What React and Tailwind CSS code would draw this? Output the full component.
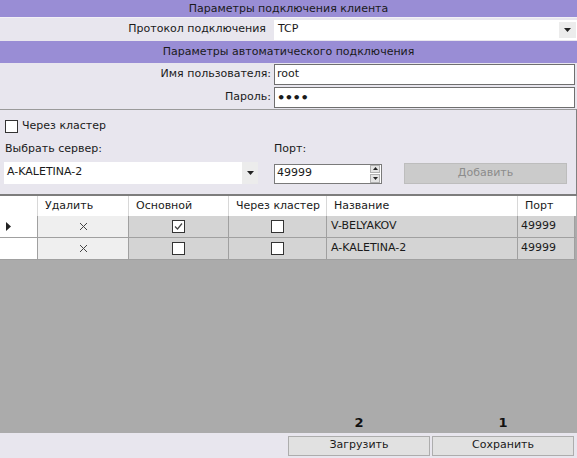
import React from "react";

const Caret = () => (
  <svg width="7" height="4" viewBox="0 0 7 4"><path d="M0 0h7L3.5 4z" fill="#222" /></svg>
);

const Box = ({ checked }) => (
  <span className="inline-flex w-[13px] h-[13px] border border-[#333] bg-white items-center justify-center">
    {checked && (
      <svg width="11" height="11" viewBox="0 0 11 11"><path d="M2 5.5l2.5 2.5L9 2.5" fill="none" stroke="#444" strokeWidth="1.2" /></svg>
    )}
  </span>
);

export default function App() {
  const font = { fontFamily: '"DejaVu Sans", Verdana, sans-serif' };
  const cols = "grid grid-cols-[38px_91px_100px_98px_191px_57px]";
  const rows = [
    { main: true, name: "V-BELYAKOV", port: "49999", cur: true },
    { main: false, name: "A-KALETINA-2", port: "49999" },
  ];
  return (
    <div style={font} className="w-[577px] h-[458px] flex flex-col bg-[#e8e6ee] text-[11px] text-[#1a1a1a] overflow-hidden">
      <div className="h-[17px] bg-[#998dd5] flex items-center justify-center leading-none">Параметры подключения клиента</div>
      <div className="h-[24px] flex items-center border-t border-[#f2f0f6]">
        <div className="w-[274px] text-right pr-[8px]">Протокол подключения</div>
        <div className="flex-1 h-[20px] bg-white flex items-center pl-[4px]">
          <span className="flex-1">TCP</span>
          <span className="w-[17px] h-[16px] bg-[#ececec] flex items-center justify-center mr-[1px]"><Caret /></span>
        </div>
      </div>
      <div className="h-[22px] bg-[#998dd5] flex items-center justify-center">Параметры автоматического подключения</div>
      <div className="h-[23px] flex items-center">
        <div className="w-[274px] text-right pr-[3px]">Имя пользователя:</div>
        <div className="flex-1 h-[21px] mr-[2px] bg-white border border-[#6f6f6f] flex items-center pl-[2px]">root</div>
      </div>
      <div className="h-[23px] flex items-center">
        <div className="w-[274px] text-right pr-[3px]">Пароль:</div>
        <div className="flex-1 h-[21px] mr-[2px] bg-white border border-[#6f6f6f] flex items-center pl-[2px] text-[13px] font-bold leading-none tracking-[-0.5px]">••••</div>
      </div>
      <div className="h-[85px] border-t border-[#9a9a9a] border-r border-r-[#808080] flex flex-col pl-[5px]">
        <div className="mt-[10px] h-[13px] flex items-center gap-[4px]">
          <Box />
          <span>Через кластер</span>
        </div>
        <div className="mt-[8px] flex">
          <div className="w-[269px]">Выбрать сервер:</div>
          <div>Порт:</div>
        </div>
        <div className="mt-[4px] flex items-start">
          <div className="w-[254px] -ml-[1px] h-[22px] bg-white flex items-center pl-[3px]">
            <span className="flex-1">A-KALETINA-2</span>
            <span className="w-[16px] h-[22px] bg-[#ececec] flex items-center justify-center"><Caret /></span>
          </div>
          <div className="ml-[16px] mt-[2px] w-[108px] h-[20px] bg-white border border-[#7a7a7a] flex items-center">
            <span className="flex-1 pl-[2px]">49999</span>
            <span className="w-[10px] h-[18px] flex flex-col gap-[1px] mr-[1px]">
              <span className="flex-1 bg-[#e4e4e4] border border-[#b0b0b0] flex items-center justify-center"><svg width="5" height="3" viewBox="0 0 5 3"><path d="M0 3h5L2.5 0z" fill="#222" /></svg></span>
              <span className="flex-1 bg-[#e4e4e4] border border-[#b0b0b0] flex items-center justify-center"><svg width="5" height="3" viewBox="0 0 5 3"><path d="M0 0h5L2.5 3z" fill="#222" /></svg></span>
            </span>
          </div>
          <div className="ml-[22px] mt-[1px] w-[163px] h-[21px] bg-[#cbcbcb] border border-[#bdbdbd] flex items-center justify-center text-[#8c8c8c]">Добавить</div>
        </div>
      </div>
      <div className="flex-1 bg-[#ababab] flex flex-col border-t-2 border-[#7d7d7d]">
        <div className="w-[576px]">
          <div className={`${cols} h-[20px] bg-white`}>
            <div className="border-r border-[#d8d8d8]"></div>
            <div className="border-r border-[#d8d8d8] flex items-center pl-[7px]">Удалить</div>
            <div className="border-r border-[#d8d8d8] flex items-center pl-[7px]">Основной</div>
            <div className="border-r border-[#d8d8d8] flex items-center pl-[7px]">Через кластер</div>
            <div className="border-r border-[#d8d8d8] flex items-center pl-[7px]">Название</div>
            <div className="flex items-center pl-[7px]">Порт</div>
          </div>
          {rows.map((r, i) => (
            <div key={i} className={`${cols} h-[22px] border-b border-[#a0a0a0]`}>
              <div className="bg-white border-r border-[#a0a0a0] flex items-center pl-[6px]">
                {r.cur && <svg width="5" height="9" viewBox="0 0 5 9"><path d="M0 0l5 4.5L0 9z" fill="#222" /></svg>}
              </div>
              <div className="bg-[#efefef] border-r border-[#a0a0a0] flex items-center justify-center text-[#333]">
                <svg width="9" height="9" viewBox="0 0 9 9"><path d="M1 1l7 7M8 1L1 8" stroke="#444" strokeWidth="1" /></svg>
              </div>
              <div className="bg-[#d4d4d4] border-r border-[#a0a0a0] flex items-center justify-center"><Box checked={r.main} /></div>
              <div className="bg-[#d4d4d4] border-r border-[#a0a0a0] flex items-center justify-center"><Box /></div>
              <div className="bg-[#d4d4d4] border-r border-[#a0a0a0] flex items-center pl-[4px]">{r.name}</div>
              <div className="bg-[#d4d4d4] border-r border-[#a0a0a0] flex items-center pl-[3px]">{r.port}</div>
            </div>
          ))}
        </div>
        <div className="flex-1 flex items-end justify-end pr-[3px] pb-[1px] font-bold text-[13px] text-[#111]">
          <div className="w-[142px] text-center">2</div>
          <div className="w-[2px]"></div>
          <div className="w-[142px] text-center">1</div>
        </div>
      </div>
      <div className="h-[25px] flex items-center justify-end pr-[3px] gap-[2px]">
        <div className="w-[142px] h-[20px] bg-[#e1e1e1] border border-[#adadad] flex items-center justify-center">Загрузить</div>
        <div className="w-[142px] h-[20px] bg-[#e1e1e1] border border-[#adadad] flex items-center justify-center">Сохранить</div>
      </div>
    </div>
  );
}
